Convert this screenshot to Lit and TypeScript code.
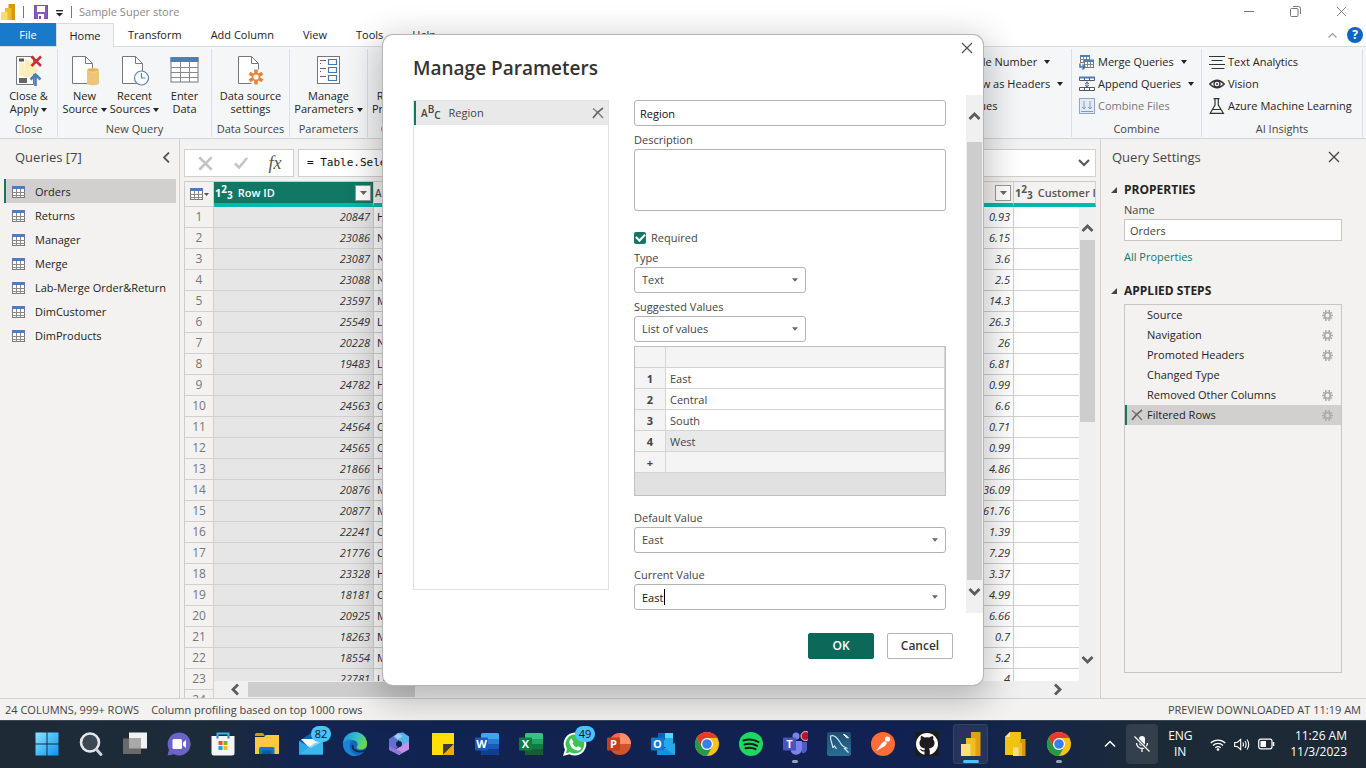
import { LitElement, html, svg, css, nothing, TemplateResult } from "lit";
import { customElement, property } from "lit/decorators.js";
import { classMap } from "lit/directives/class-map.js";

const icon = (w: number, h: number, body: unknown, box = `0 0 ${w} ${h}`) =>
  html`<svg width=${w} height=${h} viewBox=${box} fill="none" aria-hidden="true">${body}</svg>`;

const tableGlyph = (w: number, h: number) =>
  icon(w, h, svg`
    <rect x="0.5" y="0.5" width="12" height="11" fill="#fff" stroke="#777"/>
    <rect x="0" y="0" width="13" height="3" fill="#4a7fb8"/>
    <path d="M0 6.500h13M0 9.500h13M4.500 3v9M8.500 3v9" stroke="#888"/>`, "0 0 13 12");

const caret = icon(7, 4, svg`<path d="M0 0h7L3.500 4z" fill="currentColor"/>`);
const cross = (s: number, w = 1.3) =>
  icon(s, s, svg`<path d="M1 1l10 10M11 1L1 11" stroke="currentColor" stroke-width=${w}/>`, "0 0 12 12");
const roughCross = icon(12, 12, svg`<path d="M1 1.500q5 3.500 10 9.500" stroke="#777" stroke-width="1.300"/><path d="M11 1Q5 5 1 11" stroke="#666" stroke-width="1.600"/>`);
const chevron = (d: string) => icon(13, 13, svg`<path d=${d} stroke="#5c5c5c" stroke-width="2.800"/>`);
const UP = "M1.500 9l5-5 5 5";
const DOWN = "M1.500 4l5 5 5-5";
const LEFT = "M9 1.500l-5 5 5 5";
const RIGHT = "M4 1.500l5 5-5 5";

const page = svg`<path d="M1.500 1.500h13l7 7v20h-20z" fill="#fff" stroke="#777"/><path d="M14.500 1.500v7h7" stroke="#777"/>`;
const gearTeeth = svg`<path d="M0-7.500V7.500M-6.500-3.750L6.500 3.750M-6.500 3.750L6.500-3.750" stroke="currentColor" stroke-width="3.600"/><circle r="4.200" fill="currentColor"/><circle r="2.600" fill="#fff"/>`;

const big = {
  close: icon(28, 31, svg`
    <path d="M1.500 1.500h17v28h-17z" fill="#fff" stroke="#777"/>
    <path d="M4 3.500h5v3H4z" fill="#555"/><path d="M4 8h5v13H4z" fill="#fff0b8"/>
    <path d="M10 4l8 3 5 9-6 4-5 3-3-1z" fill="#fdeeb5"/><path d="M4 23h8v5H4z" fill="#666"/>
    <path d="M16.500 1.500l9.500 9.500M26 1.500L16.500 11" stroke="#cc3030" stroke-width="2.600"/>
    <path d="M20.500 31V20M15.500 24.500l5-5 5 5" stroke="#4a7fb8" stroke-width="2.600"/>`),
  source: icon(28, 31, svg`${page}<path d="M16 15v13c0 3 12 3 12 0V15z" fill="#ecc57b"/><ellipse cx="22" cy="15" rx="6" ry="2" fill="#e3b25a" stroke="#f9e3b5" stroke-width=".6"/>`),
  recent: icon(28, 31, svg`${page}<circle cx="20.500" cy="23" r="7" fill="#fff" stroke="#5b83b4" stroke-width="1.200"/><path d="M20.500 18v5h4" stroke="#5b83b4" stroke-width="1.200"/>`),
  enter: icon(29, 31, svg`<rect x="1" y="3" width="27" height="24" fill="#fff" stroke="#777"/><rect x=".5" y="2" width="28" height="5" fill="#4a7fb8"/><path d="M1 12.500h27M1 17.500h27M1 22.500h27M10.500 7v20M19.500 7v20" stroke="#888"/>`),
  settings: icon(28, 31, svg`${page}<circle cx="19" cy="22" r="8" fill="#fff"/><g transform="translate(19 22)" color="#e8833a">${gearTeeth}</g>`),
  params: icon(25, 31, svg`<rect x="1.500" y="1.500" width="22" height="27" fill="#fff" stroke="#777"/><path d="M4 5.500h6M4 13.500h6M4 21.500h6M4 8.500h1M4 16.500h1" stroke="#666"/><path d="M12.500 4.500h8v5h-8zM12.500 12.500h8v5h-8zM12.500 20.500h8v5h-8z" stroke="#3f78bd" stroke-width="1.200"/>`),
  refresh: icon(28, 31, page),
};

const small = {
  blank: icon(16, 16, svg`<rect x="2.500" y="2.500" width="11" height="11" stroke="#777"/>`),
  merge: icon(16, 16, svg`<rect x="1.500" y="1.500" width="9" height="7" fill="#fff" stroke="#777"/><path d="M1 1h10v2H1z" fill="#4a7fb8"/><path d="M1 5.500h9M4.500 3v6M7.500 3v6" stroke="#888"/><rect x="5.500" y="6.500" width="9" height="7" fill="#fff" stroke="#777"/><path d="M5 5.500h10v2.500H5z" fill="#4a7fb8"/><path d="M6 10.500h9M8.500 8v6M11.500 8v6" stroke="#888"/><path d="M1 9.500v3.500h4M3.500 10.500l2.500 2.500-2.500 2.500" stroke="#3c74b0" stroke-width="1.500"/>`),
  append: icon(16, 16, svg`<path d="M.5 1.500h15v3H.5zM.5 11.500h15v3H.5z" fill="#fff" stroke="#555"/><path d="M0 .5h16v2H0z" fill="#4a7fb8"/><path d="M5.500 2v3M10.500 2v3M5.500 12v3M10.500 12v3" stroke="#555"/><path d="M8 5.500v5M6 8l2-2 2 2M6 9l2 2 2-2" stroke="#3c74b0"/>`),
  files: icon(16, 16, svg`<rect x=".5" y=".5" width="15" height="15" fill="#e3ebf7" stroke="#92a4c6"/><path d="M5 3v8M3 9l2 2 2-2M11 3v8M9 9l2 2 2-2M2 13.500h12" stroke="#8498c0"/>`),
  text: icon(16, 16, svg`<path d="M0 2.500h16M2.500 6.500h11M0 10.500h16M2.500 14.500h13" stroke="#333"/>`),
  vision: icon(16, 16, svg`<path d="M.7 8q7.300-7.500 14.600 0-7.300 7.500-14.600 0z" stroke="#333" stroke-width="1.300"/><circle cx="8" cy="8" r="3" stroke="#333" stroke-width="1.300"/><circle cx="8" cy="8" r="1" fill="#333"/>`),
  flask: icon(16, 16, svg`<path d="M4.500.7h6M6 1v6L1.200 15.300h13.200L9.300 7V1M4 11.500h8" stroke="#333" stroke-width="1.200"/>`),
};

@customElement("ribbon-group")
class RibbonGroup extends LitElement {
  @property() label = "";
  static styles = css`
    :host { display: flex; flex-direction: column; border-right: 1px solid #dcdfe3; margin: 2px 0 1px; padding-top: 2px; box-sizing: border-box; flex: none; }
    .items { display: flex; flex: 1; justify-content: center; }
    .label { text-align: center; line-height: 16px; color: #444; white-space: nowrap; }
  `;
  render() {
    return html`<div class="items"><slot></slot></div><div class="label">${this.label}</div>`;
  }
}

const office = (a: string, b: string, c: string, d: string, letter: string) => icon(26, 26, svg`
  <rect x="7" y="2" width="18" height="22" rx="1.500" fill=${a}/><path d="M7 8h18v5H7z" fill=${b}/><path d="M7 13h18v5H7z" fill=${c}/><path d="M7 18h18v4.500a1.500 1.500 0 0 1-1.500 1.500h-15A1.500 1.500 0 0 1 7 22.500z" fill=${d}/>
  <rect x="1" y="6.500" width="13" height="13" rx="1" fill=${c}/><text class="glyph" x="7.500" y="17" text-anchor="middle">${letter}</text>`);
const chrome = icon(26, 26, svg`
  <circle cx="13" cy="13" r="12" fill="#fbc116"/>
  <path d="M13 7h10.400A12 12 0 0 0 2.600 7L8 16z" fill="#e33b2e"/>
  <path d="M2.600 7A12 12 0 0 0 13 25l5.200-9L8 16z" fill="#279847"/>
  <circle cx="13" cy="13" r="6" fill="#fff"/><circle cx="13" cy="13" r="4.800" fill="#3b7ded"/>`);
const badge = (n: string) => html`<span class="badge">${n}</span>`;

const apps: { name: string; art: TemplateResult; extra?: unknown; cls?: string }[] = [
  { name: "Start", art: icon(26, 26, svg`<defs><linearGradient id="wn" x2="1" y2="1"><stop stop-color="#8be4ff"/><stop offset="1" stop-color="#0a93f0"/></linearGradient></defs><path d="M1.500 1.500h11v11h-11zM13.500 1.500h11v11h-11zM1.500 13.500h11v11h-11zM13.500 13.500h11v11h-11z" fill="url(#wn)"/>`) },
  { name: "Search", art: icon(26, 26, svg`<circle cx="12" cy="11.500" r="9" fill="#3c4854" stroke="#e4e7ea" stroke-width="2.600"/><path d="M18.500 18.500l4.500 5" stroke="#cfd3d8" stroke-width="3" stroke-linecap="round"/>`) },
  { name: "Task view", art: icon(26, 26, svg`<rect x="7" y="1.500" width="18" height="16" fill="#f2f2f2"/><rect x="1" y="7.500" width="18" height="15.500" fill="#6a6a6a"/><path d="M7 7.500h12v10H7z" fill="#a9a9a9"/>`) },
  { name: "Chat", art: icon(26, 26, svg`<path d="M13 1.500a11.500 11.500 0 1 1-5 21.800L1.500 24.500 3 18.500A11.500 11.500 0 0 1 13 1.500z" fill="#6c63c9"/><rect x="6.500" y="8" width="9.500" height="10" rx="1.500" fill="#fff"/><path d="M17 11.500l3-2.500v8L17 14.500z" fill="#fff"/>`) },
  { name: "Store", art: icon(26, 26, svg`<path d="M7.500 6V2.500h11V6" stroke="#35b8f0" stroke-width="2"/><path d="M1.500 5h23v17a2.500 2.500 0 0 1-2.500 2.500H4A2.500 2.500 0 0 1 1.500 22z" fill="#f5f5f5"/><path d="M7.500 5v2.500M18.500 5v2.500" stroke="#1f86c0" stroke-width="2"/><path d="M8.500 10h4v4h-4z" fill="#f0502a"/><path d="M13.500 10h4v4h-4z" fill="#7db900"/><path d="M8.500 15h4v4h-4z" fill="#1ba3e8"/><path d="M13.500 15h4v4h-4z" fill="#fcb813"/>`) },
  { name: "Explorer", art: icon(26, 26, svg`<path d="M1 3.500A1.500 1.500 0 0 1 2.500 2H9l2 3H1z" fill="#d9940b"/><path d="M1 6h9l2-2h13v19H1z" fill="#fdc93f"/><path d="M5 17.500A1.500 1.500 0 0 1 6.500 16h12.500a1.500 1.500 0 0 1 1.500 1.500V23H5z" fill="#1277c5"/><path d="M8.500 19.500h9v3.500h-9z" fill="#0c5a9e"/>`) },
  { name: "Mail", art: icon(26, 26, svg`<path d="M1 10L13 2l12 8v13.500H1z" fill="#0b63b5"/><path d="M3 8h20v7l-10 4z" fill="#f6f6f6"/><path d="M1 10l12 7 12-7v13.500H1z" fill="#2aa9ea"/><path d="M1 23.500L17 12l8-2v13.500z" fill="#49bff2" opacity=".6"/>`), extra: badge("82") },
  { name: "Edge", art: icon(26, 26, svg`<defs><linearGradient id="eg" x2="1" y2=".4"><stop stop-color="#1a8fd8"/><stop offset=".6" stop-color="#35c1c8"/><stop offset="1" stop-color="#66d84e"/></linearGradient></defs><circle cx="13" cy="13" r="12" fill="#1167b8"/><path d="M1 13a12 12 0 0 1 24 0c0 4-3 5.500-6 5.500-3.500 0-5-1.500-4-3 2-3.500-1-6.500-4.500-6.500C5.500 9 2 11 1 13z" fill="url(#eg)"/><path d="M10.500 9C5 13 8 22 15.500 24.700A12 12 0 0 1 1 13c1-3.500 6-5.500 9.500-4z" fill="#1a83d4"/><path d="M10.500 14c-.5 5 5 8.500 12.500 5.500l2-1.500" stroke="#12234e" stroke-width="1.600"/>`) },
  { name: "Microsoft 365", art: icon(26, 26, svg`<path d="M12 2l5-.5 6 4v8l-7 3.500-3-4z" fill="#58b5ea"/><path d="M12 2l5 3-5 4v7l-5 4-4-3V8z" fill="#6470cf"/><path d="M12 2l5 3-5 4-4-3.500z" fill="#93d3f2"/><path d="M7 20l9-5.500 7-4v8L13 24z" fill="#c293e8"/><path d="M3 15v4l10 5 3-3-9-4z" fill="#8f78d8"/><circle cx="13" cy="13" r="3" fill="#12234e"/>`) },
  { name: "Sticky notes", art: icon(26, 26, svg`<path d="M2 2h22v22H2z" fill="#ffdf06"/><path d="M13 24V13h11z" fill="#3c3c3c"/><path d="M13 24l11-11v11z" fill="#f0ac00"/>`) },
  { name: "Word", art: office("#41a5ee", "#2b7cd3", "#185abd", "#103f91", "W") },
  { name: "Excel", art: office("#33c481", "#21a366", "#107c41", "#185c37", "X") },
  { name: "WhatsApp", art: icon(26, 26, svg`<path d="M13 1.500a11.500 11.500 0 1 1-5.500 21.700L1 25l2-6.500A11.500 11.500 0 0 1 13 1.500z" fill="#fff"/><path d="M13 3.500a9.500 9.500 0 1 1-5 17.700L3.800 22.300 5 18A9.500 9.500 0 0 1 13 3.500z" fill="#3cc351"/><path d="M9.500 7.500l2 3.500-1 1.500q1.300 2.700 4 4l1.500-1.500 3.300 2q-1.300 3-4 2.500-7-1.500-8-8.500 0-2.500 2.200-3.500z" fill="#fff"/>`), extra: badge("49") },
  { name: "PowerPoint", art: icon(26, 26, svg`<circle cx="14" cy="13" r="11" fill="#d35230"/><path d="M14 2a11 11 0 0 1 11 11H14z" fill="#ff8f6b"/><path d="M14 2A11 11 0 0 0 3 13h11z" fill="#ed6c47"/><rect x="1" y="6.500" width="13" height="13" rx="1" fill="#c43e1c"/><text class="glyph" x="7.500" y="17" text-anchor="middle">P</text>`) },
  { name: "Outlook", art: icon(26, 26, svg`<rect x="8" y="2" width="15" height="14" fill="#28a8ea"/><path d="M8 2h7v7H8z" fill="#0364b8"/><path d="M15 2h8v5h-8z" fill="#50d9ff"/><path d="M7 12l9 6 9-6v12H7z" fill="#1490df"/><path d="M25 12v12L14 17z" fill="#28a8ea"/><rect x="1" y="6.500" width="13" height="13" rx="1" fill="#0f78d4"/><text class="glyph" x="7.500" y="17" text-anchor="middle">O</text>`) },
  { name: "Chrome", art: chrome },
  { name: "Spotify", art: icon(26, 26, svg`<circle cx="13" cy="13" r="12" fill="#1ed760"/><path d="M5.500 9.500q8-2.500 15 1.500M6.500 13.500q7-2 12.500 1.300M7.500 17.200q5.500-1.500 10 1" stroke="#101a14" stroke-width="2" stroke-linecap="round"/>`) },
  { name: "Teams", art: icon(26, 26, svg`<circle cx="14" cy="5" r="3.500" fill="#7b83eb"/><path d="M18 11h7v7a4 4 0 0 1-5 4z" fill="#5059c9"/><path d="M9 10h11v8a6 6 0 0 1-11 3z" fill="#7b83eb"/><rect x="1" y="6.500" width="13" height="13" rx="1" fill="#4b53bc"/><text class="glyph" x="7.500" y="17" text-anchor="middle">T</text><g transform="translate(2.500 -1)"><circle cx="21" cy="6" r="4.500" fill="#c50f2e" stroke="#e9cfd8"/></g>`), cls: "open" },
  { name: "MySQL Workbench", art: icon(26, 26, svg`<defs><linearGradient id="my" x2="0" y2="1"><stop stop-color="#1f4d70"/><stop offset="1" stop-color="#2a6e94"/></linearGradient></defs><rect x="1" y="1" width="24" height="24" rx="2.500" fill="url(#my)"/><path d="M7 17c-.5-4-3-8-2.500-12 3-1.500 6.500 1.500 9 5.500 1 2 2 4 4 5l3 1.500-2 .5 4 4M7 17l1.500-2 2 3" stroke="#cfe6f2" stroke-width="1.200"/><path d="M17.500 3.500l2 .5 3 3-2-.5z" fill="#fff" stroke="#fff"/>`) },
  { name: "Postman", art: icon(26, 26, svg`<circle cx="13" cy="13" r="12" fill="#ff6c37"/><path d="M6 20l6-8 3-2 2 2-2 3z" fill="#fff"/><circle cx="17.500" cy="8" r="2.600" fill="#fff"/>`) },
  { name: "GitHub", art: icon(26, 26, svg`<rect x="1" y="1" width="24" height="24" fill="#1d1b1b"/><circle cx="13" cy="13" r="11" fill="#fff"/><path d="M10.500 24v-3.500c-3.500.5-3.500-2-5-2.500 2-.5 2.500 1.800 5 1l.5-1.500c-4-.5-5.500-3-5.500-5.500 0-1.500.5-2.500 1.300-3.500-.3-1-.2-2.300.2-3.500 1.500 0 2.500.8 3.500 1.500q2.500-.6 5 0c1-.7 2-1.500 3.500-1.500.4 1.200.5 2.500.2 3.500.8 1 1.300 2 1.300 3.500 0 2.500-1.500 5-5.500 5.500.5.700.8 1.500.8 2.500v4z" fill="#1d1b1b"/>`) },
  { name: "Power BI", art: icon(26, 26, svg`<rect x="13" y="1" width="9.500" height="24" fill="#dfa011"/><rect x="8" y="7" width="9.500" height="18" fill="#f0bd2b"/><rect x="3" y="13" width="9.500" height="12" fill="#fbe07a"/>`), cls: "active" },
  { name: "Report Builder", art: icon(26, 26, svg`<path d="M8 1h11v23H3V6z" fill="#f2c411"/><path d="M8 1v5H3z" fill="#fbe88a"/><rect x="18" y="8" width="5.500" height="17" fill="#d9960f"/><rect x="14.500" y="12" width="5.500" height="13" fill="#efbd2c"/><rect x="11" y="16.500" width="5.500" height="8.500" fill="#fbe07a"/>`) },
  { name: "Chrome window", art: chrome, cls: "open" },
];

const rows: [string, string, string][] = [
  ["20847", "High", "0.93"], ["23086", "Not Specified", "6.15"], ["23087", "Not Specified", "3.6"], ["23088", "Not Specified", "2.5"],
  ["23597", "Medium", "14.3"], ["25549", "Low", "26.3"], ["20228", "Not Specified", "26"], ["19483", "Low", "6.81"],
  ["24782", "High", "0.99"], ["24563", "Critical", "6.6"], ["24564", "Critical", "0.71"], ["24565", "Critical", "0.99"],
  ["21866", "High", "4.86"], ["20876", "Medium", "36.09"], ["20877", "Medium", "61.76"], ["22241", "Critical", "1.39"],
  ["21776", "Critical", "7.29"], ["23328", "High", "3.37"], ["18181", "Critical", "4.99"], ["20925", "Medium", "6.66"],
  ["18263", "Medium", "0.7"], ["18554", "Medium", "5.2"], ["22781", "Low", "4"], ["", "", ""],
];

const num = html`<span class="t123">1<sup>2</sup><sub>3</sub></span>`;
const abc = html`<span class="abc">A<sup>B</sup><sub>C</sub></span>`;

@customElement("app-root")
class AppRoot extends LitElement {
  static styles = css`
    :host { display: flex; flex-direction: column; height: 100vh; overflow: hidden; font: 11px/16px "Open Sans", "Noto Sans", sans-serif; color: #252423; }
    * { box-sizing: border-box; }
    button, input, select, textarea { font: inherit; color: inherit; margin: 0; padding: 0; border: 0; background: none; border-radius: 0; outline: 0; text-align: inherit; appearance: none; resize: none; }
    svg { display: block; flex: none; }
    h1, h2, ul, ol { margin: 0; padding: 0; list-style: none; font-weight: 400; }
    .window { position: relative; flex: 1; min-height: 0; display: flex; flex-direction: column; background: #f3f2f1; }

    .title { display: flex; align-items: center; height: 23px; background: #fff; padding-left: 1px; color: #8a8a8a; }
    .title .sep { width: 1px; height: 12px; background: #777; margin: 0 10px 0 7px; }
    .title .sep2 { margin: 0 7px 0 8px; }
    .title .more { margin: 4px 0 0 8px; color: #222; }
    .wbtns { margin-left: auto; display: flex; gap: 35px; padding-right: 19px; color: #777; }

    .tabs { display: flex; height: 24px; background: #fff; border-bottom: 1px solid #d9dcdf; }
    .tabs button { height: 23px; text-align: center; color: #222; padding: 0 15px 0 14px; }
    .tabs .file { background: #1979ca; color: #fff; width: 56px; padding: 0; }
    .tabs .home { background: #f5f6f8; height: 24px; width: 58px; padding: 0; border: 1px solid #d9dcdf; border-bottom: 0; }
    .help { margin-left: auto; display: flex; align-items: center; gap: 10px; padding-right: 3px; color: #999; }
    .help span { width: 16px; height: 16px; border-radius: 8px; background: #0a66c8; color: #fff; font-weight: 700; font-size: 12px; text-align: center; }

    .ribbon { display: flex; height: 92px; background: #f5f6f8; border-bottom: 1px solid #d2d4d6; padding-right: 3px; }
    .big { display: flex; flex-direction: column; align-items: center; text-align: center; line-height: 13px; padding-top: 4px; white-space: nowrap; }
    .big .lbl { margin-top: 3px; }
    .big .lbl svg { display: inline-block; vertical-align: middle; }
    .g1 { width: 58px; } .g2 { width: 154px; } .g3 { width: 78px; } .g4 { width: 78px; } .g6 { width: 130px; } .g7 { width: 161px; }
    .b50 { width: 50px; }
    .grow { flex: 1; border-right: 0; }
    .lines { display: flex; flex-direction: column; flex: 1; padding: 0 0 0 7px; }
    .line { display: flex; align-items: center; gap: 3px; height: 22px; white-space: nowrap; }
    .line .dd { margin-left: 4px; }
    .off { color: #777; }
    .transform { width: 276px; }
    .transform .lines { flex: none; width: 176px; }

    .main { flex: 1; min-height: 0; display: flex; }
    .queries { width: 180px; border-right: 1px solid #d2d0ce; padding: 8px 3px 0 4px; }
    .qhead { display: flex; justify-content: space-between; align-items: center; padding: 0 6px 0 11px; height: 20px; color: #444; }
    .qhead h2, .shead { font-size: 13px; }
    .queries ul { padding-top: 12px; }
    .queries button.q { display: flex; align-items: center; gap: 10px; width: 100%; height: 24px; padding: 1px 0 0 6px; border-left: 2px solid transparent; white-space: nowrap; }
    .queries .q.on { background: #d2d0ce; border-color: #117865; }

    .center { flex: 1; min-width: 0; display: flex; flex-direction: column; padding: 10px 4px 0 4px; }
    .fbar { display: flex; gap: 4px; height: 28px; }
    .fbtns, .fx { background: #fff; border: 1px solid #d0d0d0; display: flex; align-items: center; }
    .fbtns { width: 110px; justify-content: space-around; color: #c4c4c4; padding: 0 1px 0 2px; }
    .fbtns i { font: italic 18px/20px "Liberation Serif", serif; color: #555; }
    .fx { flex: 1; padding: 0 5px 0 8px; }
    .fx input { flex: 1; font: 11px/16px "DejaVu Sans Mono", monospace; color: #111; }
    .grid { position: relative; flex: 1; min-height: 0; overflow: hidden; margin-top: 4px; }
    .grid table { border-collapse: separate; border-spacing: 0; table-layout: fixed; width: 100%; background: #fff; border-left: 1px solid #ccc; border-top: 1px solid #ccc; }
    .cnum { width: 29px; } .cid { width: 160px; } .cval { width: 160px; } .clast { width: 82px; }
    .grid th, .grid td { padding: 0; border-right: 1px solid #d0d0d0; border-bottom: 1px solid #d0d0d0; white-space: nowrap; overflow: hidden; }
    .grid th { height: 25px; background: #f3f2f1; text-align: left; color: #555; border-bottom: 4px solid #01b8aa; font-weight: 600; }
    .grid th.corner { border-bottom: 1px solid #d0d0d0; padding-left: 5px; }
    .corner div, .hd { display: flex; align-items: center; gap: 1px; height: 20px; }
    .hd { gap: 5px; padding: 0 2px 0 1px; }
    .hd button { margin-left: auto; width: 16px; height: 16px; border: 1px solid #999; background: #fff; display: grid; place-items: center; color: #666; }
    .hd .name { overflow: visible; }
    .grid th.sel { background: #117865; color: #fff; }
    .grid td { height: 21px; }
    .grid td.n { background: #f3f2f1; text-align: center; color: #777; font-size: 12px; }
    .grid td.num { text-align: right; font-style: italic; padding-right: 3px; color: #333; }
    .grid td.id { background: #e6e6e6; }
    .grid td.t { padding-left: 3px; }
    .t123 { font: 700 11px/12px "Open Sans", sans-serif; white-space: nowrap; }
    .t123 sup, .abc sup { font-size: 10px; line-height: 0; vertical-align: 4px; }
    .t123 sub, .abc sub { font-size: 10px; line-height: 0; vertical-align: -2px; }
    .abc { font: 600 10px/12px "Open Sans", sans-serif; }
    .vbar { position: absolute; right: 0; top: 26px; bottom: 17px; width: 17px; background: #f0f0f0; display: flex; flex-direction: column; align-items: center; padding: 15px 0; gap: 5px; }
    .vbar div { width: 15px; height: 182px; background: #cdcdcd; margin-bottom: auto; }
    .hbar { position: absolute; left: 30px; right: 0; bottom: 0; height: 17px; background: #f0f0f0; display: flex; align-items: center; padding: 0 32px 0 15px; gap: 6px; }
    .hbar div { width: 167px; height: 15px; background: #cdcdcd; margin-right: auto; }

    .settings { width: 266px; border-left: 1px solid #d2d0ce; padding: 8px 24px 25px 11px; display: flex; flex-direction: column; }
    .shead { display: flex; align-items: center; justify-content: space-between; height: 20px; color: #444; padding-right: 2px; margin-bottom: 13px; }
    .sect { display: flex; align-items: center; gap: 7px; font-weight: 700; font-size: 12px; height: 20px; margin-left: -1px; }
    .in { padding: 2px 0 0 12px; display: flex; flex-direction: column; }
    .in label { color: #444; }
    .in input { height: 22px; border: 1px solid #c8c6c4; background: #fff; padding: 0 5px; color: #444; margin-top: 1px; }
    .in a { color: #117865; text-decoration: none; margin: 8px 0 16px; }
    .steps { flex: 1; margin: 3px 0 0 12px; border: 1px solid #c8c6c4; }
    .steps li { display: flex; align-items: center; height: 20px; padding: 0 8px 0 20px; border-left: 2px solid transparent; }
    .steps li span { flex: 1; color: #252423; }
    .steps li.on { background: #d2d0ce; border-color: #117865; padding-left: 4px; gap: 4px; }

    .status { display: flex; align-items: center; height: 22px; border-top: 1px solid #d2d0ce; padding: 0 5px; gap: 12px; color: #444; }
    .status span:last-child { margin-left: auto; }

    .veil { position: absolute; inset: 0; display: grid; place-items: center; }
    .dialog { width: 600px; background: #fff; border-radius: 10px; box-shadow: 0 0 0 1px #b5b5b5, 0 10px 34px 6px rgba(0, 0, 0, .24); display: flex; flex-direction: column; padding-bottom: 26px; }
    .dtop { display: flex; justify-content: flex-end; padding: 7px 10px 0 0; color: #555; }
    .dialog h1 { font-size: 19px; line-height: 26px; font-weight: 600; color: #333; padding: 1px 30px 14px; }
    .dbody { display: flex; height: 518px; padding-left: 30px; }
    .plist { width: 196px; height: 490px; margin: 5px 25px 0 0; border: 1px solid #e0e0e0; }
    .plist li { display: flex; align-items: center; height: 24px; background: #e9e9e9; border-left: 2px solid #117865; padding: 0 4px 0 5px; gap: 8px; color: #444; }
    .plist li span:nth-child(2) { flex: 1; }
    .form { width: 312px; padding-top: 5px; display: flex; flex-direction: column; color: #444; margin-right: 20px; }
    .form label { display: block; height: 17px; }
    .box { border: 1px solid #b3b3b3; border-radius: 3px; background: #fff; height: 26px; width: 100%; }
    .pname { padding: 0 5px; color: #111; margin-bottom: 6px; }
    .area { height: 62px; margin-bottom: 19px; display: block; }
    .form .check { display: flex; align-items: center; gap: 5px; height: 16px; margin-bottom: 4px; }
    .check input { width: 12px; height: 12px; border-radius: 2px; background: #117865; display: grid; place-items: center; }
    .check input::after { content: ""; width: 7px; height: 4px; border: solid #fff; border-width: 0 0 2px 2px; transform: rotate(-45deg) translate(1px, -1px); }
    .combo { position: relative; display: flex; width: 100%; color: #444; }
    .combo .box { padding: 0 20px 0 7px; }
    .combo > svg { position: absolute; right: 8px; top: 11px; width: 6px; color: #666; }
    .short { width: 172px; }
    .m6 { margin-bottom: 6px; } .m4 { margin-bottom: 4px; } .m14 { margin-bottom: 14px; }
    .combo .typed { color: #111; }
    .ibeam { position: absolute; left: 30px; top: 5px; width: 1px; height: 16px; background: #000; }
    .vals { border: 1px solid #bfbfbf; background: #e1e1e1; height: 150px; margin-bottom: 14px; }
    .vals table { border-collapse: separate; border-spacing: 0; table-layout: fixed; width: 100%; }
    .vals th, .vals td { height: 21px; padding: 1px 0 0; border-right: 1px solid #d4d4d4; border-bottom: 1px solid #d4d4d4; background: #fff; }
    .vals th, .vals .soft { background: #f4f4f4; }
    .vals .rn { width: 31px; }
    .vals td { padding-left: 4px; }
    .vals .hot { background: #e9e9e9; }
    .vscroll { width: 17px; background: #f0f0f0; display: flex; flex-direction: column; align-items: center; padding: 15px 0; }
    .vscroll div { flex: 1; width: 15px; background: #cdcdcd; margin: 19px 0 5px; }
    .dfoot { display: flex; justify-content: flex-end; gap: 13px; padding: 20px 30px 0 0; }
    .dfoot button { width: 66px; height: 26px; border-radius: 2px; border: 1px solid #b3b3b3; text-align: center; font-weight: 600; font-size: 12px; color: #333; }
    .dfoot .ok { background: #0c695a; border-color: #0c695a; color: #fff; }

    .taskbar { flex: none; height: 48px; display: flex; align-items: center; border-top: 1px solid #3b4757; padding: 0 19px 1px 25px; color: #fff; background: linear-gradient(90deg, #1e2a36 0%, #1c2b3a 16%, #122450 22%, #112152 66%, #14254a 74%, #1c2a37 84%, #1c2935 100%); }
    .glyph { font: 700 11px "Open Sans", sans-serif; fill: #fff; }
    .app { position: relative; width: 44px; height: 40px; display: grid; place-items: center; }
    .badge { position: absolute; left: 22px; top: 2px; width: 20px; height: 16px; border-radius: 8px; background: #4cc2ff; color: #111; line-height: 16px; text-align: center; }
    .open::after, .active::after { content: ""; position: absolute; bottom: 1px; left: 19px; width: 6px; height: 3px; border-radius: 2px; background: #9aa3b0; }
    .active::after { left: 14px; width: 16px; background: #4cc2ff; }
    .active::before { content: ""; position: absolute; inset: 0 5px 0 4px; border-radius: 4px; background: rgba(255, 255, 255, .08); border: 1px solid rgba(255, 255, 255, .08); }
    .active svg { position: relative; }
    .tray { margin-left: auto; display: flex; align-items: center; font-size: 12px; }
    .mic { width: 32px; height: 40px; border-radius: 4px; background: rgba(255, 255, 255, .1); display: grid; place-items: center; margin: 0 10px; }
    .lang { text-align: center; width: 24px; margin-right: 18px; }
    .stat { display: flex; gap: 8px; align-items: center; margin-right: 15px; }
    .clock { text-align: right; }
  `;

  private big(art: TemplateResult, a: string, b: string, dd = false, cls = "") {
    return html`<button class="big ${cls}">${art}<span class="lbl">${a}<br>${b} ${dd ? icon(6, 4, svg`<path d="M0 0h6L3 4z" fill="#222"/>`) : nothing}</span></button>`;
  }
  private line(art: TemplateResult | typeof nothing, text: string, dd = false, off = false) {
    return html`<button class=${classMap({ line: true, off })}>${art}<span>${text}</span>${dd ? html`<span class="dd">${icon(6, 4, svg`<path d="M0 0h6L3 4z" fill="#222"/>`)}</span>` : nothing}</button>`;
  }
  private head(kind: TemplateResult, text: string, sel = false) {
    return html`<th class=${sel ? "sel" : ""}><div class="hd">${kind}<span>${text}</span><button aria-label="Filter ${text}">${caret}</button></div></th>`;
  }

  private dialog() {
    return html`<div class="veil"><div class="dialog" role="dialog" aria-labelledby="dt">
      <div class="dtop"><button aria-label="Close">${cross(12)}</button></div>
      <h1 id="dt">Manage Parameters</h1>
      <div class="dbody">
        <ul class="plist"><li>${abc}<span>Region</span><button aria-label="Remove Region">${roughCross}</button></li></ul>
        <div class="form">
          <input class="box pname" aria-label="Name" .value=${"Region"}>
          <label for="desc">Description</label>
          <textarea id="desc" class="box area"></textarea>
          <label class="check"><input type="checkbox" checked>Required</label>
          <label for="type">Type</label>
          <div class="combo short m6"><select id="type" class="box"><option>Text</option></select>${caret}</div>
          <label for="sug">Suggested Values</label>
          <div class="combo short m4"><select id="sug" class="box"><option>List of values</option></select>${caret}</div>
          <div class="vals"><table>
            <colgroup><col class="rn"><col></colgroup>
            <tr><th></th><th></th></tr>
            ${["East", "Central", "South", "West"].map((v, i) => html`<tr><th>${i + 1}</th><td class=${i === 3 ? "hot" : ""}>${v}</td></tr>`)}
            <tr><th>+</th><td class="soft"></td></tr>
          </table></div>
          <label for="def">Default Value</label>
          <div class="combo m14"><select id="def" class="box"><option>East</option></select>${caret}</div>
          <label for="cur">Current Value</label>
          <div class="combo"><input id="cur" class="box typed" .value=${"East"}><span class="ibeam"></span>${caret}</div>
        </div>
        <div class="vscroll">${chevron(UP)}<div></div>${chevron(DOWN)}</div>
      </div>
      <div class="dfoot"><button class="ok">OK</button><button>Cancel</button></div>
    </div></div>`;
  }

  render() {
    const steps: [string, boolean][] = [["Source", true], ["Navigation", true], ["Promoted Headers", true], ["Changed Type", false], ["Removed Other Columns", true], ["Filtered Rows", true]];
    const gear = icon(11, 11, svg`<path d="M3.800 0v3M7.200 0v3M3.800 8v3M7.200 8v3M0 5.500h3M8 5.500h3M1 2.500l2 1M10 2.500l-2 1M1 8.500l2-1M10 8.500l-2-1" stroke="#adadad" stroke-width="1.600"/><circle cx="5.500" cy="5.500" r="2.800" stroke="#adadad" stroke-width="1.700"/>`);
    const tri = icon(6, 6, svg`<path d="M6 0v6H0z" fill="#444"/>`);
    return html`
      <div class="window">
        <header class="title">
          ${icon(15, 17, svg`<rect x="7.500" y="1" width="6.500" height="16" fill="#d9960f"/><rect x="4" y="5" width="6.500" height="12" fill="#efbd2c"/><rect x="0" y="9" width="6.500" height="8" fill="#fbdc6c"/>`)}
          <span class="sep"></span>
          ${icon(14, 14, svg`<path d="M.7.700h12.600v12.600H.7z" fill="#fff" stroke="#7b4fa8" stroke-width="1.500"/><path d="M2 1h10v5H2z" fill="#fff"/><path d="M1 7h12v6H1z" fill="#8a5bb8"/><path d="M1 1h2v6H1zM11 1h2v6h-2z" fill="#8a5bb8"/><path d="M4 9h6v5H4z" fill="#fff"/><path d="M5 11h2v3H5z" fill="#7b4fa8"/>`)}
          <span class="more">${icon(7, 7, svg`<path d="M0 .7h7" stroke="#222" stroke-width="1.300"/><path d="M0 3h7L3.500 6.500z" fill="#222"/>`)}</span>
          <span class="sep sep2"></span>
          <span>Sample Super store</span>
          <div class="wbtns">
            ${icon(11, 11, svg`<path d="M0 5.500h10" stroke="currentColor"/>`)}
            ${icon(11, 11, svg`<rect x=".5" y="2.500" width="7.500" height="8" rx="1" stroke="currentColor"/><path d="M3 .5h5.500a2 2 0 0 1 2 2V8" stroke="currentColor"/>`)}
            ${cross(11, 1)}
          </div>
        </header>
        <nav class="tabs">
          <button class="file">File</button><button class="home">Home</button>
          <button>Transform</button><button>Add Column</button><button>View</button><button>Tools</button><button>Help</button>
          <div class="help">${icon(9, 6, svg`<path d="M.5 5.500l4-4 4 4" stroke="currentColor" stroke-width="1.200"/>`)}<span>?</span></div>
        </nav>
        <section class="ribbon">
          <ribbon-group class="g1" label="Close">${this.big(big.close, "Close &", "Apply", true)}</ribbon-group>
          <ribbon-group class="g2" label="New Query">${this.big(big.source, "New", "Source", true, "b50")}${this.big(big.recent, "Recent", "Sources", true, "b50")}${this.big(big.enter, "Enter", "Data", false, "b50")}</ribbon-group>
          <ribbon-group class="g3" label="Data Sources">${this.big(big.settings, "Data source", "settings")}</ribbon-group>
          <ribbon-group class="g4" label="Parameters">${this.big(big.params, "Manage", "Parameters", true)}</ribbon-group>
          <ribbon-group class="g1" label="Query">${this.big(big.refresh, "Refresh", "Preview", true, "b50")}</ribbon-group>
          <ribbon-group class="grow" label=""></ribbon-group>
          <ribbon-group class="transform" label="Transform">${this.big(big.enter, "Split", "Column", true, "b50")}${this.big(big.enter, "Group", "By", false, "b50")}<div class="lines">${this.line(nothing, "Data Type: Whole Number", true)}${this.line(small.blank, "Use First Row as Headers", true)}${this.line(small.blank, "Replace Values")}</div></ribbon-group>
          <ribbon-group class="g6" label="Combine"><div class="lines">${this.line(small.merge, "Merge Queries", true)}${this.line(small.append, "Append Queries", true)}${this.line(small.files, "Combine Files", false, true)}</div></ribbon-group>
          <ribbon-group class="g7" label="AI Insights"><div class="lines">${this.line(small.text, "Text Analytics")}${this.line(small.vision, "Vision")}${this.line(small.flask, "Azure Machine Learning")}</div></ribbon-group>
        </section>
        <div class="main">
          <aside class="queries">
            <div class="qhead"><h2>Queries [7]</h2><button aria-label="Collapse">${icon(7, 11, svg`<path d="M6 .5l-5 5 5 5" stroke="#555" stroke-width="1.800"/>`)}</button></div>
            <ul>${["Orders", "Returns", "Manager", "Merge", "Lab-Merge Order&Return", "DimCustomer", "DimProducts"].map((q, i) => html`<li><button class=${classMap({ q: true, on: i === 0 })}>${tableGlyph(13, 12)}${q}</button></li>`)}</ul>
          </aside>
          <main class="center">
            <div class="fbar">
              <div class="fbtns">${cross(15, 2)}${icon(14, 12, svg`<path d="M1 6.500l4 4L13 1" stroke="currentColor" stroke-width="2.600"/>`)}<i>fx</i></div>
              <div class="fx"><input aria-label="Formula" .value=${'= Table.SelectRows(#"Removed Other Columns", each [Region] = Region)'}>${icon(12, 8, svg`<path d="M1 1l5 5 5-5" stroke="#555" stroke-width="2"/>`)}</div>
            </div>
            <div class="grid">
              <table>
                <colgroup><col class="cnum"><col class="cid"><col><col class="cval"><col class="clast"></colgroup>
                <thead><tr><th class="corner"><div>${tableGlyph(13, 12)}${icon(5, 3, svg`<path d="M0 0h5L2.500 3z" fill="#555"/>`)}</div></th>
                  ${this.head(num, "Row ID", true)}${this.head(abc, "Order Priority")}${this.head(num, "Unit Price")}
                  <th><div class="hd">${num}<span>Customer ID</span></div></th></tr></thead>
                <tbody>${rows.map(([a, b, c], i) => html`<tr><td class="n">${i + 1}</td><td class="num id">${a}</td><td class="t">${b}</td><td class="num">${c}</td><td></td></tr>`)}</tbody>
              </table>
              <div class="vbar">${chevron(UP)}<div></div>${chevron(DOWN)}</div>
              <div class="hbar">${chevron(LEFT)}<div></div>${chevron(RIGHT)}</div>
            </div>
          </main>
          <aside class="settings">
            <div class="shead"><span>Query Settings</span><button aria-label="Close settings">${cross(12)}</button></div>
            <div class="sect">${tri}PROPERTIES</div>
            <div class="in"><label for="qn">Name</label><input id="qn" .value=${"Orders"}><a href="#">All Properties</a></div>
            <div class="sect">${tri}APPLIED STEPS</div>
            <ol class="steps">${steps.map(([s, g], i) => html`<li class=${i === 5 ? "on" : ""}>${i === 5 ? roughCross : nothing}<span>${s}</span>${g ? gear : nothing}</li>`)}</ol>
          </aside>
        </div>
        <footer class="status"><span>24 COLUMNS, 999+ ROWS</span><span>Column profiling based on top 1000 rows</span><span>PREVIEW DOWNLOADED AT 11:19 AM</span></footer>
        ${this.dialog()}
      </div>
      <footer class="taskbar">
        ${apps.map((a) => html`<button class="app ${a.cls ?? ""}" aria-label=${a.name}>${a.art}${a.extra ?? nothing}</button>`)}
        <div class="tray">
          ${icon(12, 8, svg`<path d="M1 6.500l5-5 5 5" stroke="#fff" stroke-width="1.500"/>`)}
          <span class="mic">${icon(18, 18, svg`<rect x="6" y="1" width="6" height="10" rx="3" fill="#fff"/><path d="M3.500 8a5.500 5.500 0 0 0 11 0M9 13.500V17" stroke="#fff" stroke-width="1.300"/><path d="M1.500 1.500l15 15" stroke="#2f3b47" stroke-width="3"/><path d="M1.500 1.500l15 15" stroke="#fff" stroke-width="1.200"/>`)}</span>
          <span class="lang">ENG<br>IN</span>
          <span class="stat">
            ${icon(16, 13, svg`<path d="M.7 5a10.500 10.500 0 0 1 14.600 0M3 7.500a7 7 0 0 1 10 0M5.300 9.800a4 4 0 0 1 5.400 0" stroke="#fff" stroke-width="1.200"/><circle cx="8" cy="11.500" r="1.300" fill="#fff"/>`)}
            ${icon(16, 13, svg`<path d="M.7 4.500h2.500l3.500-3v10l-3.500-3H.7z" stroke="#fff" stroke-width="1.100"/><path d="M8.800 4.500q1.300 2 0 4M11 3q2.300 3.500 0 7M13 1.500q3.500 5 0 10" stroke="#fff" stroke-width="1.100"/>`)}
            ${icon(17, 12, svg`<rect x=".7" y="1.200" width="13.300" height="9.600" rx="2" stroke="#fff" stroke-width="1.200"/><rect x="2.500" y="3" width="5.500" height="6" fill="#fff"/><path d="M15.500 4v4" stroke="#fff" stroke-width="1.500"/>`)}
          </span>
          <span class="clock">11:26 AM<br>11/3/2023</span>
        </div>
      </footer>`;
  }
}
